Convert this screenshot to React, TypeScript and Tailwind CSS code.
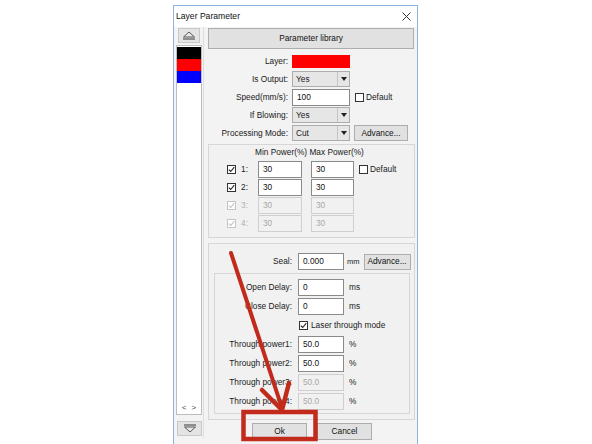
import React from "react";

const font = { fontFamily: '"Liberation Sans", Arial, sans-serif' };

const Check = ({ on = true, disabled = false }: { on?: boolean; disabled?: boolean }) => (
  <div
    className={`w-[9px] h-[9px] border bg-white flex items-center justify-center shrink-0 ${
      disabled ? "border-[#c4c4c4]" : "border-[#333]"
    }`}
  >
    {on && (
      <svg width="7" height="7" viewBox="0 0 7 7">
        <path
          d="M0.8 3.6 L2.7 5.5 L6.3 1.2"
          fill="none"
          stroke={disabled ? "#c4c4c4" : "#222"}
          strokeWidth="1.1"
        />
      </svg>
    )}
  </div>
);

const Input = ({
  value,
  w,
  disabled = false,
}: {
  value: string;
  w: string;
  disabled?: boolean;
}) => (
  <div
    className={`${w} h-[17px] border flex items-center pl-[4px] shrink-0 ${
      disabled
        ? "bg-[#f1f1f1] border-[#cfcfcf] text-[#a8a8a8]"
        : "bg-white border-[#8a8a8a] text-[#111]"
    }`}
  >
    {value}
  </div>
);

const Select = ({ value }: { value: string }) => (
  <div className="w-[58px] h-[16px] border border-[#adadad] bg-[#e6e6e6] flex shrink-0">
    <div className="flex-1 flex items-center pl-[3px]">{value}</div>
    <div className="w-[12px] border-l border-[#c4c4c4] flex items-center justify-center">
      <svg width="6" height="4" viewBox="0 0 6 4">
        <path d="M0 0 H6 L3 4 Z" fill="#222" />
      </svg>
    </div>
  </div>
);

const Btn = ({ label, w, h = "h-[16px]" }: { label: string; w: string; h?: string }) => (
  <div
    className={`${w} ${h} border border-[#adadad] bg-[#e1e1e1] flex items-center justify-center shrink-0 text-[#111]`}
  >
    {label}
  </div>
);

const Tri = ({ up }: { up: boolean }) => (
  <svg width="14" height="9" viewBox="0 0 14 9">
    {up ? (
      <>
        <path d="M1.5 6 L7 1 L12.5 6 Z" fill="#e9e9e9" stroke="#555" strokeWidth="1" />
        <path d="M1 8 H13" stroke="#555" strokeWidth="1.2" />
      </>
    ) : (
      <>
        <path d="M1.5 3 L7 8 L12.5 3 Z" fill="#e9e9e9" stroke="#555" strokeWidth="1" />
        <path d="M1 1 H13" stroke="#555" strokeWidth="1.2" />
      </>
    )}
  </svg>
);

const TopRow = ({ label, children }: { label: string; children: React.ReactNode }) => (
  <div className="h-[18px] flex items-center">
    <div className="w-[88px] text-right pr-[4px] shrink-0">{label}</div>
    {children}
  </div>
);

const PowerRow = ({ n, disabled = false, def = false }: { n: number; disabled?: boolean; def?: boolean }) => (
  <div className="h-[18px] flex items-center pl-[18px]">
    <Check disabled={disabled} />
    <div className={`w-[22px] pl-[5px] shrink-0 ${disabled ? "text-[#b0b0b0]" : ""}`}>{n}:</div>
    <Input value="30" w="w-[44px]" disabled={disabled} />
    <div className="w-[9px] shrink-0" />
    <Input value="30" w="w-[43px]" disabled={disabled} />
    {def && (
      <div className="flex items-center ml-[5px]">
        <Check on={false} />
        <span className="ml-[2px]">Default</span>
      </div>
    )}
  </div>
);

const DelayRow = ({
  label,
  value,
  unit,
  disabled = false,
}: {
  label: string;
  value: string;
  unit: string;
  disabled?: boolean;
}) => (
  <div className="h-[19px] flex items-center">
    <div className="w-[77px] text-right shrink-0">{label}</div>
    <div className="w-[6px] shrink-0" />
    <Input value={value} w="w-[46px]" disabled={disabled} />
    <span className="ml-[5px]">{unit}</span>
  </div>
);

export default function App() {
  return (
    <div
      className="relative w-[592px] h-[444px] bg-white overflow-hidden text-[8.3px] text-[#1a1a1a]"
      style={font}
    >
      <div className="pl-[173px] pt-[5px]">
        <div className="w-[245px] h-[445px] border border-[#8db3dc] bg-[#f3f3f3] flex flex-col">
          {/* Title bar */}
          <div className="h-[21px] bg-white flex items-center justify-between pl-[2px] pr-[6px] shrink-0">
            <span className="text-[8.6px] text-[#111]">Layer Parameter</span>
            <svg width="9" height="9" viewBox="0 0 9 9">
              <path d="M0.5 0.5 L8.5 8.5 M8.5 0.5 L0.5 8.5" stroke="#333" strokeWidth="1" />
            </svg>
          </div>

          <div className="flex flex-1">
            {/* Layer list */}
            <div className="w-[30px] shrink-0 flex flex-col border-r border-[#dedede] h-[411px]">
              <div className="ml-[4px] mt-[1px] w-[22px] h-[15px] bg-[#e4e4e4] border border-[#c8c8c8] flex items-center justify-center">
                <Tri up />
              </div>
              <div className="ml-[2px] mt-[2px] w-[26px] h-[370px] bg-white border border-[#bdbdbd] flex flex-col">
                <div className="mt-[1px] h-[12px] bg-black" />
                <div className="h-[12px] bg-[#ff0000]" />
                <div className="h-[12px] bg-[#0000ff]" />
                <div className="flex-1" />
                <div className="h-[12px] flex items-center justify-center gap-[5px] text-[#444] text-[8px]">
                  <span>&lt;</span>
                  <span>&gt;</span>
                </div>
              </div>
              <div className="ml-[3px] mt-[6px] w-[25px] h-[15px] bg-[#e4e4e4] border border-[#c8c8c8] flex items-center justify-center">
                <Tri up={false} />
              </div>
            </div>

            {/* Parameters */}
            <div className="flex-1 flex flex-col">
              <div className="ml-[4px] mt-[1px]">
                <Btn label="Parameter library" w="w-[206px]" h="h-[21px]" />
              </div>

              <div className="mt-[3px] flex flex-col">
                <TopRow label="Layer:">
                  <div className="w-[58px] h-[13px] bg-[#ff0000]" />
                </TopRow>
                <TopRow label="Is Output:">
                  <Select value="Yes" />
                </TopRow>
                <TopRow label="Speed(mm/s):">
                  <Input value="100" w="w-[58px]" />
                  <div className="flex items-center ml-[5px]">
                    <Check on={false} />
                    <span className="ml-[2px]">Default</span>
                  </div>
                </TopRow>
                <TopRow label="If Blowing:">
                  <Select value="Yes" />
                </TopRow>
                <TopRow label="Processing Mode:">
                  <Select value="Cut" />
                  <div className="ml-[4px]">
                    <Btn label="Advance..." w="w-[54px]" />
                  </div>
                </TopRow>
              </div>

              {/* Power group */}
              <div className="ml-[4px] mt-[2px] w-[207px] h-[94px] border border-[#d6d6d6] bg-[#f1f1f1] flex flex-col">
                <div className="h-[15px] flex items-center pl-[46px]">Min Power(%) Max Power(%)</div>
                <PowerRow n={1} def />
                <PowerRow n={2} />
                <PowerRow n={3} disabled />
                <PowerRow n={4} disabled />
              </div>

              {/* Seal group */}
              <div className="ml-[4px] mt-[5px] w-[207px] h-[177px] border border-[#d6d6d6] bg-[#f1f1f1] flex flex-col">
                <div className="mt-[9px] h-[17px] flex items-center">
                  <div className="w-[83px] text-right shrink-0">Seal:</div>
                  <div className="w-[6px] shrink-0" />
                  <Input value="0.000" w="w-[46px]" />
                  <span className="ml-[3px] text-[7.5px]">mm</span>
                  <div className="ml-[4px]">
                    <Btn label="Advance..." w="w-[47px]" />
                  </div>
                </div>
                <div className="ml-[5px] mt-[3px] w-[196px] h-[141px] border border-[#d6d6d6] flex flex-col pt-[4px]">
                  <DelayRow label="Open Delay:" value="0" unit="ms" />
                  <DelayRow label="Close Delay:" value="0" unit="ms" />
                  <div className="h-[19px] flex items-center pl-[84px]">
                    <Check />
                    <span className="ml-[3px]">Laser through mode</span>
                  </div>
                  <DelayRow label="Through power1:" value="50.0" unit="%" />
                  <DelayRow label="Through power2:" value="50.0" unit="%" />
                  <DelayRow label="Through power3:" value="50.0" unit="%" disabled />
                  <DelayRow label="Through power4:" value="50.0" unit="%" disabled />
                </div>
              </div>

              <div className="mt-[3px] flex pl-[48px] gap-[10px]">
                <Btn label="Ok" w="w-[55px]" h="h-[17px]" />
                <Btn label="Cancel" w="w-[55px]" h="h-[17px]" />
              </div>
            </div>
          </div>
        </div>
      </div>

      {/* Red annotation */}
      <svg
        className="absolute left-0 top-0 pointer-events-none"
        width="592"
        height="444"
        viewBox="0 0 592 444"
      >
        <path d="M231 253 L281 405" stroke="#c22a1c" strokeWidth="4" strokeLinecap="round" />
        <path
          d="M262 390 L282 410 L289 383"
          fill="none"
          stroke="#c22a1c"
          strokeWidth="4.5"
          strokeLinecap="round"
          strokeLinejoin="round"
        />
        <rect x="243.5" y="412" width="72" height="27" fill="none" stroke="#c22a1c" strokeWidth="4.5" />
      </svg>
    </div>
  );
}
